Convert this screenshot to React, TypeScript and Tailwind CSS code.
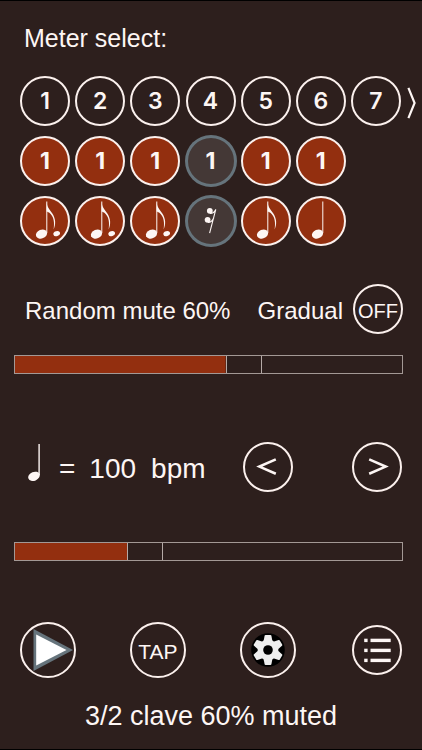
import { useState, type ReactNode } from "react";

type Beat = { note: "dotted" | "eighth" | "quarter" | "rest"; name: string };

const METERS = [1, 2, 3, 4, 5, 6, 7];

const BEATS: Beat[] = [
  { note: "dotted", name: "Dotted eighth note" },
  { note: "dotted", name: "Dotted eighth note" },
  { note: "dotted", name: "Dotted eighth note" },
  { note: "rest", name: "Sixteenth rest" },
  { note: "eighth", name: "Eighth note" },
  { note: "quarter", name: "Quarter note" },
];

const ROUND = "flex shrink-0 items-center justify-center rounded-full border-2";
const LIGHT = "border-[#fbf0ed]";
const RUST = "border-[#fbf0ed] bg-[#932f0f]";
const MUTED = "border-[#66747c] bg-[#443836] ring-1 ring-[#66747c]";

function NoteGlyph({ note }: { note: Beat["note"] }) {
  if (note === "rest") {
    return (
      <svg viewBox="2 2 46 46" className="size-full" fill="currentColor" aria-hidden="true">
        <circle cx="23.8" cy="14.8" r="2.9" />
        <circle cx="21.6" cy="23.8" r="2.9" />
        <path
          d="M24 17.4Q28 17.4 29.8 13.4L23.6 37.2M22 26.4Q26 26.4 27.8 21.8"
          fill="none"
          stroke="currentColor"
          strokeWidth="1.1"
        />
      </svg>
    );
  }
  return (
    <svg viewBox="2 2 46 46" className="size-full" fill="currentColor" aria-hidden="true">
      <ellipse cx="21.5" cy="38.1" rx="5.8" ry="4.3" transform="rotate(-22 21.5 38.1)" />
      <path d="M26.3 5.5h1v31.5h-1z" />
      {note !== "quarter" && (
        <path d="M26.6 5.5C27 11 29.5 13.5 32 17C35.8 22.5 36 28 33.6 33.6C34.6 27 34 21.5 30.6 18C29 16.3 27.5 15.8 26.6 15.6z" />
      )}
      {note === "dotted" && (
        <ellipse cx="36.7" cy="37.6" rx="3.4" ry="2.5" transform="rotate(-18 36.7 37.6)" />
      )}
    </svg>
  );
}

function BeatRow({ children }: { children: ReactNode }) {
  return <div className="grid grid-cols-[repeat(6,1fr)_50px]">{children}</div>;
}

type BarProps = {
  id: string;
  min: number;
  max: number;
  value: number;
  onChange: (value: number) => void;
};

function Bar({ id, min, max, value, onChange }: BarProps) {
  const part = (value - min) / (max - min);
  return (
    <input
      id={id}
      type="range"
      min={min}
      max={max}
      value={value}
      onChange={(e) => onChange(Number(e.target.value))}
      style={{
        backgroundImage: "linear-gradient(#932f0f, #932f0f)",
        backgroundSize: `calc((100% - 36px) * ${part}) 100%`,
      }}
      className="block h-[19px] w-full appearance-none border border-[#a39895] bg-transparent bg-no-repeat [&::-webkit-slider-thumb]:h-[17px] [&::-webkit-slider-thumb]:w-9 [&::-webkit-slider-thumb]:appearance-none [&::-webkit-slider-thumb]:border-x [&::-webkit-slider-thumb]:border-[#b5aaa7] [&::-webkit-slider-thumb]:bg-[#2d1f1d]"
    />
  );
}

const TOOTH = "M-4.6 -8L-3.4 -14.2Q-3.2 -15 -2.4 -15H2.4Q3.2 -15 3.4 -14.2L4.6 -8z";

export default function App() {
  const [mute, setMute] = useState(60);
  const [bpm, setBpm] = useState(100);
  const [gradual, setGradual] = useState(false);

  return (
    <main className="flex min-h-screen flex-col border-y border-black bg-[#2d1f1d] font-['Liberation_Sans',Arial,sans-serif] text-[#fdf6f4]">
      <h1 className="mt-[22px] pl-6 text-[25px] leading-[30px]">Meter select:</h1>

      <section className="mt-[23px] flex items-start pl-5">
        <div className="flex flex-1 flex-col gap-[10px] font-['Inter',sans-serif] text-[23px]">
          <BeatRow>
            {METERS.map((n) => (
              <button key={n} type="button" className={`size-[50px] font-semibold ${ROUND} ${LIGHT}`}>
                {n}
              </button>
            ))}
          </BeatRow>
          <BeatRow>
            {BEATS.map((b, i) => (
              <button
                key={i}
                type="button"
                className={`size-[50px] font-bold ${ROUND} ${b.note === "rest" ? MUTED : RUST}`}
              >
                1
              </button>
            ))}
          </BeatRow>
          <BeatRow>
            {BEATS.map((b, i) => (
              <button
                key={i}
                type="button"
                aria-label={b.name}
                className={`size-[50px] ${ROUND} ${b.note === "rest" ? MUTED : RUST}`}
              >
                <NoteGlyph note={b.note} />
              </button>
            ))}
          </BeatRow>
        </div>
        <button type="button" aria-label="More meters" className="flex h-[54px] w-[21px] items-center justify-center">
          <svg viewBox="0 0 10 32" className="h-8 w-[10px]" fill="none" stroke="currentColor" strokeWidth="2.2" aria-hidden="true">
            <path d="M1.4 .8L7.6 16L1.4 31.2" />
          </svg>
        </button>
      </section>

      <section className="mt-[38px]">
        <div className="flex items-center pr-[19px] pl-[25px] text-2xl">
          <label htmlFor="mute" className="flex-1 pt-[3px] whitespace-nowrap">
            Random mute {mute}%
          </label>
          <span id="gradual" className="pt-[3px]">
            Gradual
          </span>
          <button
            type="button"
            aria-labelledby="gradual"
            aria-pressed={gradual}
            onClick={() => setGradual(!gradual)}
            className={`ml-[10px] size-[50px] pt-[3px] text-xl ${ROUND} ${LIGHT}`}
          >
            {gradual ? "ON" : "OFF"}
          </button>
        </div>
        <div className="mt-[21px] pr-[19px] pl-[14px]">
          <Bar id="mute" min={0} max={100} value={mute} onChange={setMute} />
        </div>
      </section>

      <section className="mt-[68px]">
        <div className="flex items-center pr-5 pl-7">
          <label htmlFor="tempo" className="flex h-[50px] flex-1 items-center pt-1 text-[28px] leading-[34px] whitespace-nowrap">
            <svg viewBox="0 0 13 42" className="mb-3 h-[42px] w-[13px]" fill="currentColor" aria-hidden="true">
              <ellipse cx="6" cy="34.3" rx="6" ry="4.4" transform="rotate(-22 6 34.3)" />
              <path d="M10.4 2h1.4v31h-1.4z" />
            </svg>
            <span className="ml-[18px]">=</span>
            <span className="ml-[14px]">{bpm}</span>
            <span className="ml-[15px]">bpm</span>
          </label>
          <button
            type="button"
            aria-label="Slower"
            onClick={() => setBpm(Math.max(20, bpm - 1))}
            className={`size-[50px] ${ROUND} ${LIGHT}`}
          >
            <svg viewBox="2 2 46 46" className="size-full" fill="none" stroke="currentColor" strokeWidth="2.6" aria-hidden="true">
              <path d="M32.8 17.4L16.4 24.6L32.8 31.8" />
            </svg>
          </button>
          <button
            type="button"
            aria-label="Faster"
            onClick={() => setBpm(Math.min(270, bpm + 1))}
            className={`ml-[59px] size-[50px] ${ROUND} ${LIGHT}`}
          >
            <svg viewBox="2 2 46 46" className="size-full" fill="none" stroke="currentColor" strokeWidth="2.6" aria-hidden="true">
              <path d="M17.2 17.4L33.6 24.6L17.2 31.8" />
            </svg>
          </button>
        </div>
        <div className="mt-[50px] pr-[19px] pl-[14px]">
          <Bar id="tempo" min={20} max={270} value={bpm} onChange={setBpm} />
        </div>
      </section>

      <nav className="mt-[61px] flex items-center gap-[54px] px-5">
        <button type="button" aria-label="Play" className={`size-14 ${ROUND} ${LIGHT}`}>
          <svg viewBox="2 2 52 52" className="size-full" aria-hidden="true">
            <path d="M13.5 7L53 28L13.5 49z" fill="#66747c" />
            <path d="M16.2 12.6L46.5 28L16.2 43.4z" fill="#ffffff" />
          </svg>
        </button>
        <button type="button" className={`size-14 pt-[3px] text-[21px] ${ROUND} ${LIGHT}`}>
          TAP
        </button>
        <button type="button" aria-label="Settings" className={`size-14 ${ROUND} ${LIGHT}`}>
          <svg viewBox="-26 -26 52 52" className="size-full" aria-hidden="true">
            <circle r="16.8" fill="#000000" />
            <g fill="#efefef">
              <circle r="10.4" />
              {[0, 60, 120, 180, 240, 300].map((a) => (
                <path key={a} d={TOOTH} transform={`rotate(${a})`} />
              ))}
            </g>
            <circle r="4.8" fill="#000000" />
          </svg>
        </button>
        <button type="button" aria-label="Presets" className={`ml-auto size-[50px] ${ROUND} ${LIGHT}`}>
          <svg viewBox="2 2 46 46" className="size-full" fill="currentColor" aria-hidden="true">
            {[13.7, 23.7, 33.7].map((y) => (
              <g key={y}>
                <rect x="12.2" y={y} width="3.4" height="3.4" />
                <rect x="18.5" y={y} width="20.2" height="3.4" />
              </g>
            ))}
          </svg>
        </button>
      </nav>

      <p className="mt-[22px] text-center text-[27px] leading-8">3/2 clave 60% muted</p>
    </main>
  );
}
